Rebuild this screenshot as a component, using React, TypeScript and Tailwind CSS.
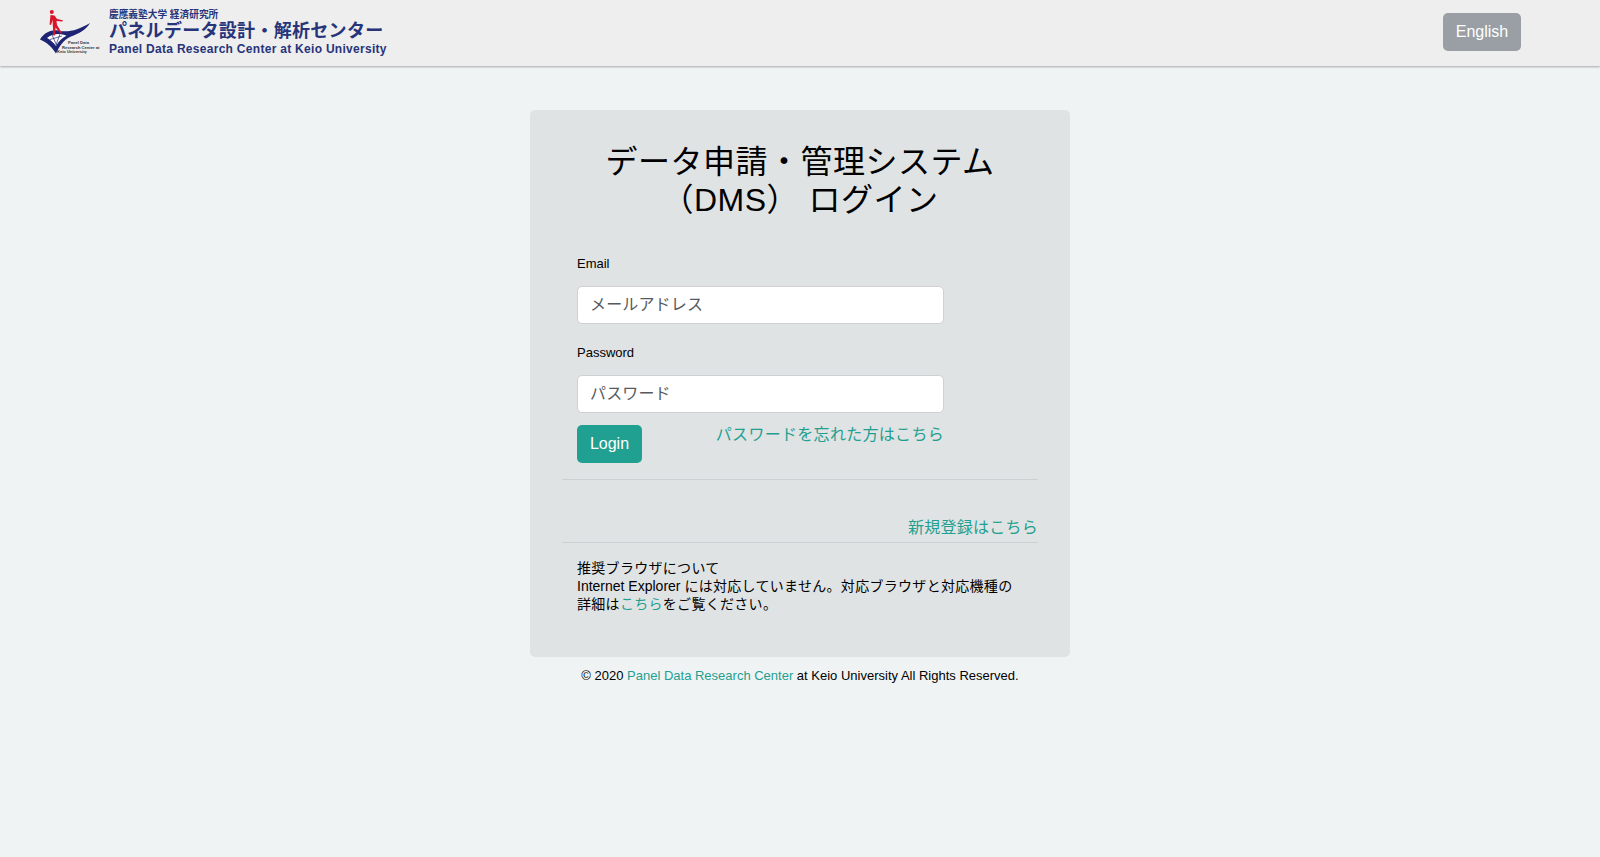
import React from 'react';

function LogoMark() {
  return (
    <svg viewBox="39 8 62 48" className="w-[62px] h-[48px] shrink-0">
      {/* wing */}
      <path
        d="M40 39.5 C44 32.5 52 29.5 58 30.5 C68 33 78 30 90 23 C86 30 78 34 71 36.5 C64 39.5 60 45 56 53.5 C52 47 47 42.5 40 39.5 Z"
        fill="#1c2473"
      />
      <path
        d="M47 38 C50 35.4 54 34 58 34 C61 34 64 34.6 66.5 35.8 C62 38 59 41 56 46 C53.5 42.6 50.5 40 47 38 Z"
        fill="#ffffff"
      />
      <path d="M52 34.8 L56.5 45 M60 34 L56 45 M50 39.5 L62 36" stroke="#1c2473" strokeWidth="0.7" fill="none" />
      {/* figure */}
      <circle cx="51.8" cy="12" r="2" fill="#d9142b" />
      <path
        d="M50.5 15 L54.5 15.5 L57 19 L62.8 20.2 L62.5 21.6 L56.5 21 L57 25 L61.8 32.8 L60.4 33.6 L55.5 27.5 L55 35.5 L53.4 35.5 L52.8 25 L52.6 20 L51 25 L49.6 24.6 Z"
        fill="#d9142b"
      />
      <g fill="#333" fontSize="4.1" fontWeight="700" fontFamily="'Liberation Sans', sans-serif">
        <text x="68" y="44.2">Panel Data</text>
        <text x="62" y="48.8">Research Center at</text>
        <text x="57" y="53.4">Keio University</text>
      </g>
    </svg>
  );
}

function Logo() {
  return (
    <div className="flex items-start gap-[8px] pt-[8px]">
      <LogoMark />
      <div className="flex flex-col font-bold text-[#27347a] whitespace-nowrap">
        <span className="text-[9.7px] leading-[13px]">慶應義塾大学 経済研究所</span>
        <span className="text-[18px] leading-[22px] -mt-[1px] tracking-[0.3px]">パネルデータ設計・解析センター</span>
        <span className="text-[12px] leading-[14px] tracking-[0.29px]">Panel Data Research Center at Keio University</span>
      </div>
    </div>
  );
}

function Field({ label, placeholder, type, gap }: { label: string; placeholder: string; type: string; gap: string }) {
  return (
    <div>
      <label className={`block text-[13px] leading-[19.5px] ${gap}`}>{label}</label>
      <input
        type={type}
        placeholder={placeholder}
        className="block w-[367px] h-[38px] px-3 text-base tracking-[0.15px] bg-white border border-[#ced0d3] rounded-[5px] placeholder:text-[#555a5f] outline-none"
      />
    </div>
  );
}

export default function App() {
  return (
    <div className="min-h-[857px] bg-[#eff3f4] text-black font-['Liberation_Sans','Noto_Sans_CJK_JP',sans-serif]">
      {/* Header */}
      <header className="h-[66px] bg-[#eeeeee] shadow-[0_1px_2px_rgba(0,0,0,0.3)] flex items-start justify-between pl-[39px] pr-[79px]">
        <Logo />
        <button className="mt-[13px] w-[78px] h-[38px] rounded-[5px] text-base text-white bg-[#999fa4]">English</button>
      </header>

      {/* Login card */}
      <main className="w-[540px] mx-auto mt-[44px]">
        <div className="bg-[#e0e3e4] rounded-[5px] px-8 pt-[33px] pb-[44px]">
          <h1 className="text-[32px] leading-[38.4px] text-center tracking-[0.5px]">
            データ申請・管理システム
            <br />
            （DMS） ログイン
          </h1>

          <div className="pl-[15px] mt-[34px]">
            <Field label="Email" placeholder="メールアドレス" type="email" gap="mb-[13px]" />
            <div className="mt-[19px]">
              <Field label="Password" placeholder="パスワード" type="password" gap="mb-[12px]" />
            </div>
            <div className="w-[367px] mt-[12px] flex items-start justify-between">
              <button className="w-[65px] h-[38px] rounded-[5px] text-base text-white bg-[#1fa090]">Login</button>
              <a className="text-base leading-6 tracking-[0.3px] text-[#1fa090] -mt-[2px]">パスワードを忘れた方はこちら</a>
            </div>
          </div>

          <hr className="mt-4 border-t border-[#cdd0d2]" />
          <div className="mt-[36px] text-right text-base leading-6 tracking-[0.25px] text-[#1fa090]">
            <a>新規登録はこちら</a>
          </div>
          <hr className="mt-[2px] border-t border-[#cdd0d2]" />

          <p className="pl-[15px] mt-4 w-[461px] text-sm leading-[18px]">
            <span className="tracking-[0.3px]">推奨ブラウザについて</span>
            <br />
            Internet Explorer{' '}
            <span className="tracking-[0.3px]">
              には対応していません。対応ブラウザと対応機種の詳細は
              <a className="text-[#1fa090]">こちら</a>
              をご覧ください。
            </span>
          </p>
        </div>

        <p className="mt-[9px] text-center text-[13px] leading-[19.5px]">
          © 2020 <a className="text-[#1fa090]">Panel Data Research Center</a> at Keio University All Rights Reserved.
        </p>
      </main>
    </div>
  );
}
